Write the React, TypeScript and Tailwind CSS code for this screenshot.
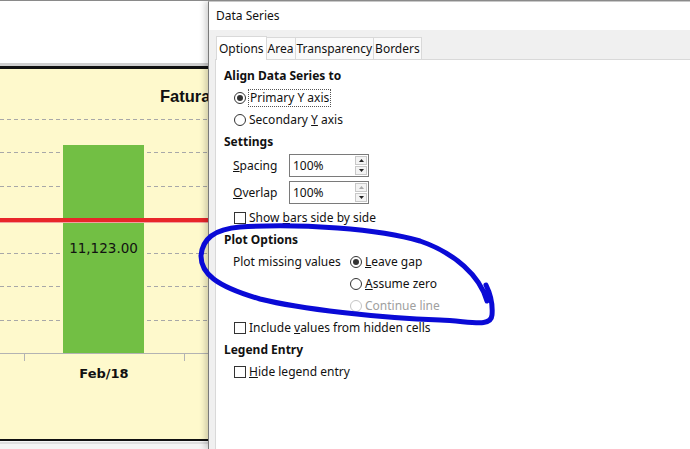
import React from "react";

const ui = { fontFamily: '"Noto Sans", "Open Sans", sans-serif' };

const Radio = ({ checked, disabled }: { checked?: boolean; disabled?: boolean }) => (
  <span
    className={`flex items-center justify-center w-[12px] h-[12px] rounded-full border bg-white shrink-0 ${
      disabled ? "border-[#c4c4c4]" : "border-[#333]"
    }`}
  >
    {checked && <span className="w-[6px] h-[6px] rounded-full bg-[#333]" />}
  </span>
);

const Check = () => (
  <span className="w-[12px] h-[12px] border border-[#333] bg-white shrink-0" />
);

const Spin = ({ upDisabled }: { upDisabled?: boolean }) => (
  <div className="flex items-center w-[80px] h-[23px] border border-[#7a7a7a] bg-white pl-[3px] pr-[1px]">
    <span className="flex-1">100%</span>
    <div className="flex flex-col gap-[1px]">
      <span className="flex items-center justify-center w-[12px] h-[9px] border border-[#c8c8c8] bg-[#f3f3f3]">
        <svg width="5" height="3" viewBox="0 0 5 3">
          <path d="M0 3 L2.5 0 L5 3 Z" fill={upDisabled ? "#a8a8a8" : "#222"} />
        </svg>
      </span>
      <span className="flex items-center justify-center w-[12px] h-[9px] border border-[#c8c8c8] bg-[#f3f3f3]">
        <svg width="5" height="3" viewBox="0 0 5 3">
          <path d="M0 0 L2.5 3 L5 0 Z" fill="#222" />
        </svg>
      </span>
    </div>
  </div>
);

const Chart = () => (
  <svg width="208" height="449" viewBox="0 0 208 449" className="block">
    <rect x="0" y="0" width="208" height="449" fill="#ffffff" />
    <rect x="0" y="62" width="208" height="3" fill="#cfcfcf" />
    <rect x="0" y="65" width="208" height="3" fill="#111" />
    <rect x="0" y="68" width="208" height="370" fill="#fef9cc" />
    <rect x="0" y="438" width="208" height="2" fill="#111" />
    <rect x="0" y="440" width="208" height="9" fill="#f4f4f4" />
    <rect x="0" y="441.5" width="208" height="1" fill="#c8c8c8" />
    {[118.5, 151.5, 185.5, 252.5, 285.5, 319.5].map((y) => (
      <line key={y} x1="0" x2="208" y1={y} y2={y} stroke="#a8a8a8" strokeWidth="1" strokeDasharray="4 3" />
    ))}
    <rect x="63" y="144" width="81" height="208" fill="#72bf44" />
    <rect x="0" y="217" width="208" height="4" fill="#e8262a" />
    <rect x="0" y="221" width="208" height="1" fill="#f2a0a0" />
    <line x1="0" x2="208" y1="352.5" y2="352.5" stroke="#b3b3b3" />
    <line x1="24.5" x2="24.5" y1="352" y2="360" stroke="#b3b3b3" />
    <line x1="184.5" x2="184.5" y1="352" y2="360" stroke="#b3b3b3" />
    <text x="160" y="101" fontFamily='"Liberation Sans", Arial, sans-serif' fontWeight="bold" fontSize="16.5" fill="#111">
      Faturamento
    </text>
    <text x="103.5" y="252" textAnchor="middle" fontFamily='"DejaVu Sans", sans-serif' fontSize="13.5" fill="#111">
      11,123.00
    </text>
    <text x="104" y="377" textAnchor="middle" fontFamily='"DejaVu Sans", sans-serif' fontWeight="bold" fontSize="13" fill="#111">
      Feb/18
    </text>
  </svg>
);

const Row = ({ children, className = "" }: { children: React.ReactNode; className?: string }) => (
  <div className={`flex items-center h-[22px] ${className}`}>{children}</div>
);

export default function App() {
  return (
    <div className="relative w-[690px] h-[449px] overflow-hidden bg-white border-t border-[#8a8a8a] text-[12px] text-[#111]" style={ui}>
      <div className="flex h-full">
        <div className="w-[208px] shrink-0 overflow-hidden">
          <Chart />
        </div>

        <div className="flex-1 flex flex-col border-l border-[#7a7a7a] border-t border-t-[#c8c8c8] bg-[#f0f0f0] shadow-[-3px_0_6px_rgba(0,0,0,0.18)] z-10">
          <div className="h-[28px] bg-white flex items-center pl-[7px]">Data Series</div>

          <div className="flex-1 flex flex-col pl-[6px]">
            <div className="flex items-end h-[30px] pl-[1px] border-b border-[#d9d9d9]">
              <div className="h-[24px] -mb-[1px] px-[2px] bg-white border border-b-0 border-[#d9d9d9] flex items-center">Options</div>
              <div className="h-[22px] px-[1px] bg-[#fafafa] border border-l-0 border-b-0 border-[#d9d9d9] flex items-center">Area</div>
              <div className="h-[22px] px-[1px] bg-[#fafafa] border border-l-0 border-b-0 border-[#d9d9d9] flex items-center">Transparency</div>
              <div className="h-[22px] px-[1px] bg-[#fafafa] border border-l-0 border-b-0 border-[#d9d9d9] flex items-center">Borders</div>
            </div>

            <div className="flex-1 bg-white border-l border-[#d9d9d9] pl-[8px] pt-[5px]">
              <Row className="font-bold">Align Data Series to</Row>
              <Row className="pl-[10px] gap-[2px]">
                <Radio checked />
                <span className="px-[1px] border border-dotted border-[#555] leading-[16px]">Primary Y axis</span>
              </Row>
              <Row className="pl-[10px] gap-[3px]">
                <Radio />
                <span>
                  Secondary <span className="underline">Y</span> axis
                </span>
              </Row>
              <Row className="font-bold">Settings</Row>
              <div className="flex items-center h-[23px] mt-[1px] pl-[9px]">
                <span className="w-[56px]">
                  <span className="underline">S</span>pacing
                </span>
                <Spin />
              </div>
              <div className="flex items-center h-[23px] mt-[4px] pl-[9px]">
                <span className="w-[56px]">
                  <span className="underline">O</span>verlap
                </span>
                <Spin upDisabled />
              </div>
              <Row className="pl-[10px] gap-[3px] mt-[3px]">
                <Check />
                <span>
                  Show <span className="underline">b</span>ars side by side
                </span>
              </Row>
              <Row className="font-bold">Plot Options</Row>
              <Row className="pl-[9px]">
                <span className="w-[117px]">Plot missing values</span>
                <Radio checked />
                <span className="ml-[3px]">
                  <span className="underline">L</span>eave gap
                </span>
              </Row>
              <Row className="pl-[126px]">
                <Radio />
                <span className="ml-[3px]">
                  <span className="underline">A</span>ssume zero
                </span>
              </Row>
              <Row className="pl-[126px] text-[#a0a0a0]">
                <Radio disabled />
                <span className="ml-[3px]">Continue line</span>
              </Row>
              <Row className="pl-[10px] gap-[3px]">
                <Check />
                <span>
                  Include <span className="underline">v</span>alues from hidden cells
                </span>
              </Row>
              <Row className="font-bold">Legend Entry</Row>
              <Row className="pl-[10px] gap-[3px]">
                <Check />
                <span>
                  <span className="underline">H</span>ide legend entry
                </span>
              </Row>
            </div>
          </div>
        </div>
      </div>

      <svg className="absolute inset-0 pointer-events-none z-20" width="690" height="449" viewBox="0 0 690 449">
        <path
          d="M487 300 C480 275 455 252 420 240 C380 228 300 222 240 226 C215 228 202 238 201 255 C201 272 215 285 260 298 C300 308 380 317 440 319 C470 320 491 327 492 314 C493 302 489 290 486 284"
          fill="none"
          stroke="#0a0ad6"
          strokeWidth="5"
          strokeLinecap="round"
          strokeLinejoin="round"
        />
      </svg>
    </div>
  );
}
